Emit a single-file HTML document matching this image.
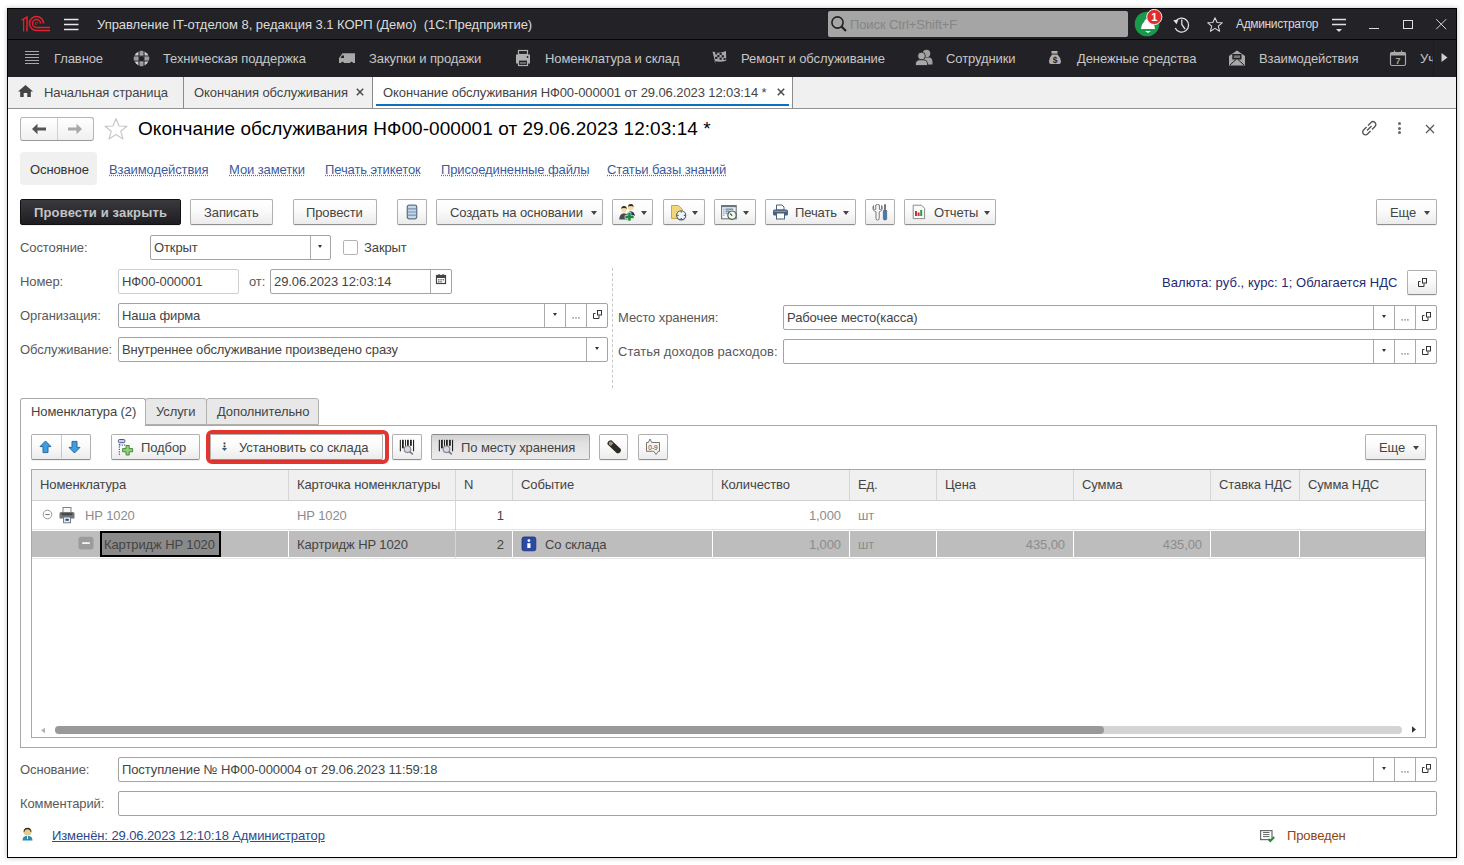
<!DOCTYPE html>
<html><head><meta charset="utf-8">
<style>
*{box-sizing:border-box;margin:0;padding:0}
html,body{width:1464px;height:865px;overflow:hidden;background:#fff}
body{position:relative;font-family:"Liberation Sans",sans-serif;font-size:13px;color:#444}
.a{position:absolute}
.t{position:absolute;white-space:pre;line-height:15px;letter-spacing:-0.1px}
.win{left:7px;top:8px;width:1450px;height:850px;border:1px solid #000;box-shadow:0 0 5px rgba(0,0,0,.25);background:#fff}
.dark{background:#232327}
.mt{color:#c6c6c6}
.tab{color:#444}
.btn{position:absolute;height:26px;top:199px;border:1px solid #b0b0b0;border-bottom-color:#8e8e8e;border-radius:2px;background:linear-gradient(#fff,#fbfbfb 45%,#ebebeb);box-shadow:0 1px 1px rgba(0,0,0,.07)}
.fld{position:absolute;border:1px solid #a3a3a3;border-radius:2px;background:#fff;height:25px}
.lbl{color:#595959}
.vd{position:absolute;top:0;bottom:0;width:1px;background:#ababab}
.lnk{color:#3c5a9a;text-decoration:underline dotted #5a70a8;text-underline-offset:1px}
.arr{position:absolute;width:0;height:0;border-left:3.5px solid transparent;border-right:3.5px solid transparent;border-top:4px solid #444}
.cd{position:absolute;top:470px;width:1px;background:#d6d6d6}
</style></head><body>
<div class="a win"></div>

<!-- title bar -->
<div class="a dark" style="left:8px;top:9px;width:1448px;height:30px"></div>
<div class="a" style="left:8px;top:39px;width:1448px;height:1px;background:#060608"></div>
<!-- menu bar -->
<div class="a dark" style="left:8px;top:40px;width:1448px;height:37px;background:#222226"></div>
<!-- tab bar -->
<div class="a" style="left:8px;top:77px;width:1448px;height:31px;background:#f0f0f0"></div>
<div class="a" style="left:8px;top:108px;width:1448px;height:1px;background:#929292"></div>

<!-- title text -->
<div class="t" style="left:97px;top:17px;color:#dcdcdc;letter-spacing:-0.04px">Управление IT-отделом 8, редакция 3.1 КОРП (Демо)  (1С:Предприятие)</div>
<!-- search -->
<div class="a" style="left:828px;top:11px;width:300px;height:26px;background:#a5a5a5;border-radius:2px"></div>
<div class="t" style="left:850px;top:17px;color:#858585">Поиск Ctrl+Shift+F</div>
<div class="t" style="left:1236px;top:17px;color:#d8d8d8;font-size:12px;letter-spacing:-0.35px">Администратор</div>

<!-- menu text -->
<div class="t mt" style="left:54px;top:51px">Главное</div>
<div class="t mt" style="left:163px;top:51px">Техническая поддержка</div>
<div class="t mt" style="left:369px;top:51px">Закупки и продажи</div>
<div class="t mt" style="left:545px;top:51px">Номенклатура и склад</div>
<div class="t mt" style="left:741px;top:51px">Ремонт и обслуживание</div>
<div class="t mt" style="left:946px;top:51px">Сотрудники</div>
<div class="t mt" style="left:1077px;top:51px">Денежные средства</div>
<div class="t mt" style="left:1259px;top:51px">Взаимодействия</div>
<div class="t mt" style="left:1420px;top:51px">Уч</div>
<div class="a" style="left:1434px;top:40px;width:22px;height:37px;background:#222226"></div>

<!-- tabs -->
<div class="a" style="left:183px;top:77px;width:1px;height:31px;background:#8a8a8a"></div>
<div class="a" style="left:372px;top:77px;width:1px;height:31px;background:#8a8a8a"></div>
<div class="a" style="left:373px;top:77px;width:419px;height:31px;background:#fff"></div>
<div class="a" style="left:792px;top:77px;width:1px;height:31px;background:#8a8a8a"></div>
<div class="a" style="left:376px;top:104px;width:413px;height:2px;background:#0a70c0"></div>
<div class="t tab" style="left:44px;top:85px">Начальная страница</div>
<div class="t tab" style="left:194px;top:85px">Окончания обслуживания</div>
<div class="t tab" style="left:383px;top:85px">Окончание обслуживания НФ00-000001 от 29.06.2023 12:03:14 *</div>

<!-- form header -->
<div class="a" style="left:20px;top:117px;width:74px;height:24px;border:1px solid #b5b5b5;border-bottom-color:#9a9a9a;border-radius:3px;background:linear-gradient(#fff,#f0f0f0)"></div>
<div class="a" style="left:57px;top:118px;width:1px;height:22px;background:#cfcfcf"></div>
<div class="t" style="left:138px;top:118px;font-size:19px;line-height:22px;color:#000;letter-spacing:0.06px">Окончание обслуживания НФ00-000001 от 29.06.2023 12:03:14 *</div>

<div class="a" style="left:20px;top:152px;width:77px;height:33px;background:#f0f0f0;border-radius:4px"></div>
<div class="t" style="left:30px;top:162px;color:#333">Основное</div>
<div class="t lnk" style="left:109px;top:162px">Взаимодействия</div>
<div class="t lnk" style="left:229px;top:162px">Мои заметки</div>
<div class="t lnk" style="left:325px;top:162px">Печать этикеток</div>
<div class="t lnk" style="left:441px;top:162px">Присоединенные файлы</div>
<div class="t lnk" style="left:607px;top:162px">Статьи базы знаний</div>

<!-- command bar -->
<div class="btn" style="left:20px;width:161px;background:linear-gradient(#3a3a3e,#1e1e22);border-color:#111"></div>
<div class="t" style="left:34px;top:205px;font-weight:bold;color:#c4c4c4;letter-spacing:0.15px">Провести и закрыть</div>
<div class="btn" style="left:190px;width:83px"></div>
<div class="t" style="left:204px;top:205px">Записать</div>
<div class="btn" style="left:293px;width:84px"></div>
<div class="t" style="left:306px;top:205px">Провести</div>
<div class="btn" style="left:397px;width:30px"></div>
<div class="btn" style="left:436px;width:167px"></div>
<div class="t" style="left:450px;top:205px">Создать на основании</div>
<div class="btn" style="left:612px;width:41px"></div>
<div class="btn" style="left:663px;width:42px"></div>
<div class="btn" style="left:714px;width:42px"></div>
<div class="btn" style="left:765px;width:91px"></div>
<div class="t" style="left:795px;top:205px">Печать</div>
<div class="btn" style="left:865px;width:30px"></div>
<div class="btn" style="left:904px;width:92px"></div>
<div class="t" style="left:934px;top:205px">Отчеты</div>
<div class="btn" style="left:1376px;width:61px"></div>
<div class="t" style="left:1390px;top:205px">Еще</div>

<!-- fields -->
<div class="t lbl" style="left:20px;top:240px">Состояние:</div>
<div class="fld" style="left:150px;top:235px;width:181px"><div class="vd" style="left:159px"></div></div>
<div class="t" style="left:154px;top:240px">Открыт</div>
<div class="a" style="left:343px;top:240px;width:15px;height:15px;border:1px solid #b3b3b3;border-radius:2px;background:#fff"></div>
<div class="t" style="left:364px;top:240px">Закрыт</div>

<div class="t lbl" style="left:20px;top:274px">Номер:</div>
<div class="fld" style="left:118px;top:269px;width:121px;border-color:#d0d0d0"></div>
<div class="t" style="left:122px;top:274px">НФ00-000001</div>
<div class="t lbl" style="left:249px;top:274px">от:</div>
<div class="fld" style="left:270px;top:269px;width:182px"><div class="vd" style="left:159px"></div></div>
<div class="t" style="left:274px;top:274px">29.06.2023 12:03:14</div>
<div class="t" style="left:1162px;top:275px;color:#1f2a70;letter-spacing:0.05px">Валюта: руб., курс: 1; Облагается НДС</div>
<div class="btn" style="left:1407px;top:270px;width:30px;height:25px"></div>

<div class="t lbl" style="left:20px;top:308px">Организация:</div>
<div class="fld" style="left:118px;top:303px;width:490px"><div class="vd" style="left:425px"></div><div class="vd" style="left:446px"></div><div class="vd" style="left:467px"></div></div>
<div class="t" style="left:122px;top:308px">Наша фирма</div>
<div class="t lbl" style="left:618px;top:310px">Место хранения:</div>
<div class="fld" style="left:783px;top:305px;width:654px"><div class="vd" style="left:589px"></div><div class="vd" style="left:610px"></div><div class="vd" style="left:631px"></div></div>
<div class="t" style="left:787px;top:310px">Рабочее место(касса)</div>

<div class="t lbl" style="left:20px;top:342px">Обслуживание:</div>
<div class="fld" style="left:118px;top:337px;width:490px"><div class="vd" style="left:467px"></div></div>
<div class="t" style="left:122px;top:342px">Внутреннее обслуживание произведено сразу</div>
<div class="t lbl" style="left:618px;top:344px;letter-spacing:0.05px">Статья доходов расходов:</div>
<div class="fld" style="left:783px;top:339px;width:654px"><div class="vd" style="left:589px"></div><div class="vd" style="left:610px"></div><div class="vd" style="left:631px"></div></div>

<div class="a" style="left:612px;top:268px;width:0;height:120px;border-left:1px dashed #c8c8c8"></div>

<!-- tab panel -->
<div class="a" style="left:20px;top:425px;width:1417px;height:323px;border:1px solid #a8a8a8"></div>
<div class="a" style="left:20px;top:398px;width:126px;height:28px;border:1px solid #a8a8a8;border-bottom:none;border-radius:3px 3px 0 0;background:#fff"></div>
<div class="a" style="left:145px;top:398px;width:62px;height:27px;border:1px solid #b0b0b0;border-radius:3px 3px 0 0;background:#e8e8e8"></div>
<div class="a" style="left:206px;top:398px;width:113px;height:27px;border:1px solid #b0b0b0;border-radius:3px 3px 0 0;background:#e8e8e8"></div>
<div class="t" style="left:31px;top:404px">Номенклатура (2)</div>
<div class="t" style="left:156px;top:404px">Услуги</div>
<div class="t" style="left:217px;top:404px">Дополнительно</div>

<!-- table toolbar -->
<div class="btn" style="left:31px;top:434px;width:60px"></div>
<div class="a" style="left:61px;top:435px;width:1px;height:23px;background:#c8c8c8"></div>
<div class="btn" style="left:111px;top:434px;width:89px"></div>
<div class="t" style="left:141px;top:440px">Подбор</div>
<div class="a" style="left:206px;top:430px;width:183px;height:34px;border:4px solid #e3342f;border-radius:6px"></div>
<div class="btn" style="left:210px;top:434px;width:173px"></div>
<div class="t" style="left:239px;top:440px">Установить со склада</div>
<div class="btn" style="left:392px;top:434px;width:30px"></div>
<div class="btn" style="left:431px;top:434px;width:159px;background:linear-gradient(#d2d2d2,#e2e2e2 35%,#ebebeb);border-color:#a4a4a4;border-top-color:#8c8c8c;box-shadow:none"></div>
<div class="t" style="left:461px;top:440px">По месту хранения</div>
<div class="btn" style="left:599px;top:434px;width:29px"></div>
<div class="btn" style="left:638px;top:434px;width:30px"></div>
<div class="btn" style="left:1365px;top:434px;width:61px"></div>
<div class="t" style="left:1379px;top:440px">Еще</div>

<!-- table -->
<div class="a" style="left:31px;top:469px;width:1395px;height:269px;border:1px solid #a8a8a8"></div>
<div class="a" style="left:32px;top:470px;width:1393px;height:30px;background:#f0f0f0"></div>
<div class="a" style="left:32px;top:500px;width:1393px;height:1px;background:#cfcfcf"></div>
<div class="a" style="left:32px;top:529px;width:1393px;height:1px;background:#e4e4e4"></div>
<div class="a" style="left:32px;top:531px;width:1393px;height:26px;background:#bdbdbd"></div>
<div class="a" style="left:32px;top:558px;width:1393px;height:1px;background:#e4e4e4"></div>
<div class="a" style="left:288px;top:531px;width:1px;height:26px;background:#fff"></div><div class="a" style="left:512px;top:531px;width:1px;height:26px;background:#fff"></div><div class="a" style="left:712px;top:531px;width:1px;height:26px;background:#fff"></div><div class="a" style="left:849px;top:531px;width:1px;height:26px;background:#fff"></div><div class="a" style="left:936px;top:531px;width:1px;height:26px;background:#fff"></div><div class="a" style="left:1073px;top:531px;width:1px;height:26px;background:#fff"></div><div class="a" style="left:1210px;top:531px;width:1px;height:26px;background:#fff"></div><div class="a" style="left:1299px;top:531px;width:1px;height:26px;background:#fff"></div>
<div class="cd" style="left:288px;height:30px"></div>
<div class="cd" style="left:455px;height:88px"></div>
<div class="cd" style="left:512px;height:30px"></div>
<div class="cd" style="left:712px;height:30px"></div>
<div class="cd" style="left:849px;height:30px"></div>
<div class="cd" style="left:936px;height:30px"></div>
<div class="cd" style="left:1073px;height:30px"></div>
<div class="cd" style="left:1210px;height:30px"></div>
<div class="cd" style="left:1299px;height:30px"></div>
<div class="t" style="left:40px;top:477px">Номенклатура</div>
<div class="t" style="left:297px;top:477px">Карточка номенклатуры</div>
<div class="t" style="left:464px;top:477px">N</div>
<div class="t" style="left:521px;top:477px">Событие</div>
<div class="t" style="left:721px;top:477px">Количество</div>
<div class="t" style="left:858px;top:477px">Ед.</div>
<div class="t" style="left:945px;top:477px">Цена</div>
<div class="t" style="left:1082px;top:477px">Сумма</div>
<div class="t" style="left:1219px;top:477px">Ставка НДС</div>
<div class="t" style="left:1308px;top:477px">Сумма НДС</div>

<div class="t" style="left:85px;top:508px;color:#8c8c8c">HP 1020</div>
<div class="t" style="left:297px;top:508px;color:#8c8c8c">HP 1020</div>
<div class="t" style="left:455px;top:508px;width:49px;text-align:right">1</div>
<div class="t" style="left:712px;top:508px;width:129px;text-align:right;color:#8c8c8c">1,000</div>
<div class="t" style="left:858px;top:508px;color:#8c8c8c">шт</div>

<div class="a" style="left:100px;top:531px;width:121px;height:26px;border:2px solid #000;background:#8a8a8a"></div>
<div class="t" style="left:104px;top:537px">Картридж HP 1020</div>
<div class="t" style="left:297px;top:537px">Картридж HP 1020</div>
<div class="t" style="left:455px;top:537px;width:49px;text-align:right">2</div>
<div class="t" style="left:545px;top:537px">Со склада</div>
<div class="t" style="left:712px;top:537px;width:129px;text-align:right;color:#8c8c8c">1,000</div>
<div class="t" style="left:858px;top:537px;color:#8c8c8c">шт</div>
<div class="t" style="left:936px;top:537px;width:129px;text-align:right;color:#8c8c8c">435,00</div>
<div class="t" style="left:1073px;top:537px;width:129px;text-align:right;color:#8c8c8c">435,00</div>

<!-- scrollbar -->
<div class="a" style="left:55px;top:726px;width:1347px;height:8px;background:#d4d4d4;border-radius:4px"></div>
<div class="a" style="left:55px;top:726px;width:1049px;height:8px;background:#999;border-radius:4px"></div>

<!-- bottom -->
<div class="t lbl" style="left:20px;top:762px">Основание:</div>
<div class="fld" style="left:118px;top:757px;width:1319px"><div class="vd" style="left:1254px"></div><div class="vd" style="left:1275px"></div><div class="vd" style="left:1296px"></div></div>
<div class="t" style="left:122px;top:762px">Поступление № НФ00-000004 от 29.06.2023 11:59:18</div>
<div class="t lbl" style="left:20px;top:796px">Комментарий:</div>
<div class="fld" style="left:118px;top:791px;width:1319px"></div>
<div class="t" style="left:52px;top:828px;color:#2b4a8c;text-decoration:underline">Изменён: 29.06.2023 12:10:18 Администратор</div>
<div class="t" style="left:1287px;top:828px;color:#8b4513">Проведен</div>


<!-- ICONS title bar -->
<svg class="a" style="left:18px;top:14px" width="36" height="20" viewBox="0 0 36 20">
 <g fill="none" stroke="#e3202e" stroke-width="1.5">
  <path d="M3.6 6.2 L9 3 V17.6"/><path d="M5.6 5.5 V17.6" stroke-width="1.2"/>
  <path d="M25.5 9.5 A7 7 0 1 0 18.5 16.5 H32" stroke-width="1.6"/>
  <path d="M22.5 9.5 A4 4 0 1 0 18.5 13.5 H32" stroke-width="1.5"/>
  <path d="M19.8 9.5 A1.3 1.3 0 1 0 18.5 10.8" stroke-width="1"/>
 </g>
</svg>
<svg class="a" style="left:63px;top:18px" width="17" height="13"><g stroke="#e8e8e8" stroke-width="1.5"><path d="M1 1.6H15.5M1 6.5H15.5M1 11.4H15.5"/></g></svg>
<svg class="a" style="left:829px;top:13px" width="20" height="22"><g fill="none" stroke="#222" stroke-width="1.6"><circle cx="8.5" cy="9.5" r="5.6"/><path d="M12.5 13.5 L17 18" stroke-width="2.2"/></g></svg>
<svg class="a" style="left:1132px;top:8px" width="34" height="32">
 <circle cx="15" cy="16" r="12.3" fill="#19994a"/>
 <path d="M9 21 Q9.5 16 12 14 Q13 10.5 16 10.5 Q19 10.5 20 14 Q22.5 16 23 21 Z" fill="#fff"/>
 <path d="M13 23 H19 L16 25 Z" fill="#fff"/>
 <circle cx="22.3" cy="9" r="7.6" fill="#e32b2b" stroke="#f3f3f3" stroke-width="1"/>
 <text x="22.3" y="13.2" font-family="Liberation Sans" font-weight="bold" font-size="11" fill="#fff" text-anchor="middle">1</text>
</svg>
<svg class="a" style="left:1171px;top:14px" width="22" height="21"><g fill="none" stroke="#e0e0e0" stroke-width="1.3"><path d="M4.6 7.5 A7 7 0 1 1 4.2 14"/><path d="M10.8 5.5 V10.5 L14 15"/></g><path d="M2.2 6.2 L7.4 5.4 L5.6 10.2 Z" fill="#e0e0e0"/></svg>
<svg class="a" style="left:1204px;top:14px" width="22" height="21"><path transform="translate(11 10.8) scale(.82) translate(-11 -10.8)" d="M11 2.2 L13.6 8 L19.8 8.4 L15 12.4 L16.6 18.6 L11 15.2 L5.4 18.6 L7 12.4 L2.2 8.4 L8.4 8 Z" fill="none" stroke="#d8d8d8" stroke-width="1.3" stroke-linejoin="round"/></svg>
<svg class="a" style="left:1330px;top:16px" width="18" height="18"><g stroke="#e0e0e0" stroke-width="1.3"><path d="M2 3.5H16M2 8.5H16"/></g><path d="M6 13H12L9 16Z" fill="#e0e0e0"/></svg>
<div class="a" style="left:1369px;top:28px;width:10px;height:1px;background:#ddd"></div>
<div class="a" style="left:1403px;top:20px;width:10px;height:9px;border:1px solid #ddd"></div>
<svg class="a" style="left:1435px;top:18px" width="13" height="13"><path d="M1.2 1.2L11.2 11.2M11.2 1.2L1.2 11.2" stroke="#d4d4d4" stroke-width="1"/></svg>

<!-- ICONS menu -->
<svg class="a" style="left:24px;top:50px" width="16" height="15"><g stroke="#a9a9a9" stroke-width="1.1"><path d="M1 1.5H15M1 4.5H15M1 7.5H15M1 10.5H15M1 13.5H15"/></g></svg>
<svg class="a" style="left:133px;top:50px" width="17" height="17">
 <circle cx="8.5" cy="8.5" r="7.6" fill="#cfcfcf"/>
 <g fill="#9a9a9a"><rect x="6.6" y="0.8" width="3.8" height="4"/><rect x="6.6" y="12.2" width="3.8" height="4"/><rect x="0.8" y="6.6" width="4" height="3.8"/><rect x="12.2" y="6.6" width="4" height="3.8"/></g>
 <g stroke="#222226" stroke-width="1.1"><path d="M6 0V17M11 0V17M0 6H17M0 11H17"/></g>
 <circle cx="8.5" cy="8.5" r="2.6" fill="#222226"/>
</svg>
<svg class="a" style="left:338px;top:52px" width="18" height="13"><path d="M4.5 1.2 H17 V11 H1 V6 Z" fill="#a8a8a8"/><path d="M4 3.5 L2.5 6 H6 V3.5Z" fill="#222226"/><circle cx="4.5" cy="11.2" r="1.4" fill="#222226"/><circle cx="13.5" cy="11.2" r="1.4" fill="#222226"/></svg>
<svg class="a" style="left:514px;top:49px" width="18" height="18"><path d="M2 5.5 H16 V14.5 H2 Z" fill="#b0b0b0"/><rect x="4.5" y="1.5" width="9" height="4" fill="none" stroke="#b0b0b0" stroke-width="1.2"/><rect x="4.5" y="11" width="9" height="5.5" fill="#222226" stroke="#b0b0b0" stroke-width="1.2"/><rect x="6" y="13.5" width="6" height="1" fill="#b0b0b0"/><circle cx="13.5" cy="8" r="0.9" fill="#222226"/></svg>
<svg class="a" style="left:711px;top:50px" width="17" height="17"><path d="M1.5 1.5 Q8 4 15 1 L15.2 10.8 Q9 12.5 3.5 11 L5 15.5 Z" fill="#a8a8a8"/><g fill="#222226"><rect x="4.2" y="2.2" width="2.2" height="2.2"/><rect x="8.5" y="2.8" width="2.2" height="2.2"/><rect x="6.3" y="5" width="2.2" height="2.2"/><rect x="10.7" y="5.2" width="2.2" height="2.2"/><rect x="4.2" y="6.8" width="2.2" height="2.2"/><rect x="8.5" y="7.6" width="2.2" height="2.2"/><rect x="12.6" y="8" width="2" height="2"/></g></svg>
<svg class="a" style="left:915px;top:49px" width="18" height="17"><circle cx="11.5" cy="4.5" r="3.8" fill="#a0a0a0"/><path d="M8 8.5 H15 Q17.5 9.5 17.5 13 V15.5 H8Z" fill="#a0a0a0"/><circle cx="6.5" cy="7" r="3.8" fill="#a8a8a8" stroke="#222226" stroke-width="0.8"/><path d="M0.5 16.5 V14 Q1 11 4.5 10.8 H8.5 Q12 11 12.5 14 V16.5Z" fill="#a8a8a8" stroke="#222226" stroke-width="0.8"/></svg>
<svg class="a" style="left:1048px;top:50px" width="14" height="15"><rect x="3.5" y="1" width="6" height="2.6" fill="#b0b0b0"/><path d="M4 4.5 H9.5 Q13 8 13 11.5 Q13 14 11 14 H3 Q1 14 1 11.5 Q1 8 4 4.5Z" fill="#b0b0b0"/><text x="7" y="12.6" font-family="Liberation Sans" font-size="8.5" font-weight="bold" fill="#222226" text-anchor="middle">$</text></svg>
<svg class="a" style="left:1228px;top:49px" width="18" height="18"><path d="M1 7 L9 1.5 L17 7 V16.5 H1Z" fill="#a8a8a8"/><rect x="4.3" y="5" width="9.2" height="5.5" fill="#222226"/><rect x="5.8" y="6.4" width="6.2" height="2.6" fill="#777"/><path d="M2 16 L8 10.5M16 16 L10 10.5" stroke="#222226" stroke-width="1"/></svg>
<svg class="a" style="left:1389px;top:49px" width="18" height="18"><rect x="1.5" y="3.5" width="15" height="13" rx="1.5" fill="none" stroke="#a8a8a8" stroke-width="1.2"/><rect x="1.5" y="3.5" width="15" height="3" fill="#a8a8a8"/><path d="M5.5 1.5 V5M12.5 1.5 V5" stroke="#a8a8a8" stroke-width="1.2"/><text x="9" y="14.8" font-family="Liberation Sans" font-size="9" font-weight="bold" fill="#a8a8a8" text-anchor="middle">7</text></svg>
<div class="a" style="left:1433px;top:40px;width:1px;height:37px;background:#1c1c20"></div>
<svg class="a" style="left:1440px;top:52px" width="9" height="11"><path d="M1.5 1 L7.5 5.5 L1.5 10Z" fill="#d0d0d0"/></svg>

<!-- ICONS tab bar -->
<svg class="a" style="left:17px;top:84px" width="17" height="14"><path d="M8.5 1 L16 7.5 H13.8 V13 H10.3 V9 H6.7 V13 H3.2 V7.5 H1Z" fill="#444"/></svg>
<svg class="a" style="left:355px;top:87px" width="10" height="10"><path d="M1.8 1.8L8.2 8.2M8.2 1.8L1.8 8.2" stroke="#4a4a4a" stroke-width="1.5"/></svg>
<svg class="a" style="left:776px;top:87px" width="10" height="10"><path d="M1.8 1.8L8.2 8.2M8.2 1.8L1.8 8.2" stroke="#4a4a4a" stroke-width="1.5"/></svg>

<!-- ICONS form header -->
<svg class="a" style="left:30px;top:122px" width="18" height="14"><path d="M2 7 L7.5 1.8 V5.5 H16 V8.5 H7.5 V12.2Z" fill="#555"/></svg>
<svg class="a" style="left:66px;top:122px" width="18" height="14"><path d="M16 7 L10.5 1.8 V5.5 H2 V8.5 H10.5 V12.2Z" fill="#a8a8a8"/></svg>
<svg class="a" style="left:103px;top:116px" width="26" height="25"><path d="M13 2.5 L16 10 L24 10.3 L17.8 15.2 L20 23 L13 18.6 L6 23 L8.2 15.2 L2 10.3 L10 10Z" fill="none" stroke="#c8c8c8" stroke-width="1.2" stroke-linejoin="round"/></svg>
<svg class="a" style="left:1360px;top:119px" width="19" height="19"><g fill="none" stroke="#555" stroke-width="1.4"><path d="M8 6.5 L11 3.5 A2.8 2.8 0 0 1 15 7.5 L12 10.5"/><path d="M10.5 12 L7.5 15 A2.8 2.8 0 0 1 3.5 11 L6.5 8"/><path d="M7 11.5 L11.5 7"/></g></svg>
<g></g>
<div class="a" style="left:1398px;top:122px;width:3px;height:3px;border-radius:50%;background:#666"></div>
<div class="a" style="left:1398px;top:126.5px;width:3px;height:3px;border-radius:50%;background:#666"></div>
<div class="a" style="left:1398px;top:131px;width:3px;height:3px;border-radius:50%;background:#666"></div>
<svg class="a" style="left:1425px;top:124px" width="10" height="10"><path d="M1 1L9 9M9 1L1 9" stroke="#555" stroke-width="1.2"/></svg>

<!-- ICONS command bar -->
<svg class="a" style="left:406px;top:204px" width="12" height="16"><rect x="1.3" y="1.2" width="9.4" height="13.6" rx="1.8" fill="#c2d8ee" stroke="#5f7186" stroke-width="1.3"/><g stroke="#7d8fa3" stroke-width="1.2"><path d="M1.5 4.8H10.5M1.5 8H10.5M1.5 11.2H10.5"/></g></svg>
<div class="arr" style="left:591px;top:211px"></div>
<svg class="a" style="left:618px;top:203px" width="19" height="18">
 <circle cx="12.8" cy="4.6" r="2.8" fill="#f3dca6"/><path d="M10 4 Q10 1 12.8 1 Q15.6 1 15.6 4 Q14 2.6 12.8 3.2 Q11.2 2.6 10 4Z" fill="#3b2b1a"/>
 <path d="M8.8 13 Q9 8.6 12.8 8.2 Q16.6 8.6 16.8 13Z" fill="#2a3350"/>
 <circle cx="6" cy="6.6" r="2.8" fill="#f3dca6"/><path d="M3.2 6 Q3.2 3 6 3 Q8.8 3 8.8 6 Q7.2 4.6 6 5.2 Q4.4 4.6 3.2 6Z" fill="#3b2b1a"/>
 <path d="M1.2 16.5 Q1.4 10.6 6 10.2 Q10.6 10.6 10.8 16.5Z" fill="#4a4a55"/>
 <path d="M9.8 9.5H13V12.5H16V15.5H13V18H9.8V15.5H7V12.5H9.8Z" fill="#1b8a3c" stroke="#e8ffee" stroke-width=".6"/>
</svg>
<div class="arr" style="left:641px;top:211px"></div>
<svg class="a" style="left:670px;top:204px" width="18" height="17">
 <path d="M1.5 1.5H8.5L12.3 5.3V14.5H1.5Z" fill="#f1d77a" stroke="#c9a84a" stroke-width="1"/>
 <circle cx="11.2" cy="11.3" r="4.6" fill="#eef2fb" stroke="#50586a" stroke-width="1.1"/>
 <g fill="#303848"><rect x="10.7" y="7.2" width="1" height="1.4"/><rect x="10.7" y="14" width="1" height="1.4"/><rect x="7.2" y="10.8" width="1.4" height="1"/><rect x="13.8" y="10.8" width="1.4" height="1"/></g>
</svg>
<div class="arr" style="left:692px;top:211px"></div>
<svg class="a" style="left:720px;top:204px" width="18" height="17">
 <rect x="1.6" y="1.6" width="14.6" height="13.2" fill="#f4f8fc" stroke="#6a7480" stroke-width="1.1"/><rect x="1.6" y="1.6" width="14.6" height="1.6" fill="#6a7480"/>
 <g fill="#3a5a9a"><rect x="3.4" y="4.6" width="1" height="1"/><rect x="3.4" y="6.6" width="1" height="1"/><rect x="3.4" y="8.6" width="1" height="1"/><rect x="3.4" y="10.6" width="1" height="1"/><rect x="5.4" y="4.6" width="8" height="1"/><rect x="5.4" y="6.6" width="4" height="1"/><rect x="5.4" y="8.6" width="2" height="1"/></g>
 <circle cx="12" cy="11.2" r="4.2" fill="#eef8ee" stroke="#4a5a4a" stroke-width="1.2"/><path d="M10.2 9.6 L12.2 11.6" stroke="#2a3a2a" stroke-width="1.1"/>
</svg>
<div class="arr" style="left:743px;top:211px"></div>
<svg class="a" style="left:772px;top:204px" width="17" height="16">
 <path d="M4.5 1 H10 L12 3 V6 H4.5Z" fill="#fff" stroke="#47607a" stroke-width="1"/>
 <rect x="1" y="5.5" width="15" height="6" rx="1.6" fill="#47607a"/>
 <rect x="4.5" y="9" width="8" height="6" fill="#fff" stroke="#47607a" stroke-width="1"/>
 <rect x="2.2" y="6.8" width="12.6" height="1" fill="#8aa0b8"/>
</svg>
<div class="arr" style="left:843px;top:211px"></div>
<svg class="a" style="left:871px;top:203px" width="18" height="18">
 <path d="M2.6 2.5 Q1.2 5 2.4 7 Q3.4 8.6 5 8.8 V15.3 Q5 17 6.6 17 Q8.2 17 8.2 15.3 V8.8 Q9.8 8.6 10.8 7 Q12 5 10.6 2.5 V5.6 Q9.8 6.8 8.4 6.4 V2 Q6.6 1 4.8 2 V6.4 Q3.4 6.8 2.6 5.6Z" fill="#f8f8f8" stroke="#777" stroke-width="1"/>
 <rect x="13.2" y="1.3" width="1.6" height="6.5" fill="#555"/><path d="M12.3 7.6 H15.7 V15.5 Q15.7 17 14 17 Q12.3 17 12.3 15.5Z" fill="#4a7aa8" stroke="#35577a" stroke-width=".6"/>
</svg>
<svg class="a" style="left:912px;top:204px" width="14" height="16">
 <path d="M1.2 1.2 H9.5 L12.6 4.3 V14.6 H1.2Z" fill="#fbfbfb" stroke="#8a8a8a" stroke-width="1"/>
 <rect x="3" y="7" width="2" height="5" fill="#c8343a"/><rect x="5.6" y="8.5" width="2" height="3.5" fill="#c8343a"/><rect x="8.2" y="6" width="2" height="6" fill="#2a9a4a"/>
</svg>
<div class="arr" style="left:984px;top:211px"></div>
<div class="arr" style="left:1424px;top:211px"></div>

<svg class="a" style="left:435px;top:273px" width="12" height="12"><rect x="1.5" y="2.5" width="9" height="8" fill="none" stroke="#444" stroke-width="1.2"/><rect x="1.5" y="2.5" width="9" height="2.5" fill="#444"/><path d="M4 1V3M8 1V3" stroke="#444" stroke-width="1.2"/><g fill="#444"><rect x="3.2" y="6.2" width="1.3" height="1.2"/><rect x="5.4" y="6.2" width="1.3" height="1.2"/><rect x="7.6" y="6.2" width="1.3" height="1.2"/><rect x="3.2" y="8.2" width="1.3" height="1.2"/><rect x="5.4" y="8.2" width="1.3" height="1.2"/></g></svg>

<!-- field buttons -->
<div class="a" style="left:318.0px;top:245px;width:0;height:0;border-left:2.5px solid transparent;border-right:2.5px solid transparent;border-top:3px solid #333"></div>
<div class="a" style="left:552.5px;top:313px;width:0;height:0;border-left:2.5px solid transparent;border-right:2.5px solid transparent;border-top:3px solid #333"></div>
<svg class="a" style="left:572px;top:317px" width="8" height="2"><g fill="#555"><rect x="0.5" y="0.3" width="1.2" height="1.2"/><rect x="3.4" y="0.3" width="1.2" height="1.2"/><rect x="6.3" y="0.3" width="1.2" height="1.2"/></g></svg>
<svg class="a" style="left:592px;top:309px" width="10" height="10"><g fill="none" stroke="#333" stroke-width="1"><rect x="5.5" y="1.5" width="4" height="4.5"/><path d="M3.5 4.5 H1.5 V9.5 H7 V6.5"/></g></svg>
<div class="a" style="left:594.5px;top:347px;width:0;height:0;border-left:2.5px solid transparent;border-right:2.5px solid transparent;border-top:3px solid #333"></div>
<div class="a" style="left:1381.5px;top:315px;width:0;height:0;border-left:2.5px solid transparent;border-right:2.5px solid transparent;border-top:3px solid #333"></div>
<svg class="a" style="left:1401px;top:319px" width="8" height="2"><g fill="#555"><rect x="0.5" y="0.3" width="1.2" height="1.2"/><rect x="3.4" y="0.3" width="1.2" height="1.2"/><rect x="6.3" y="0.3" width="1.2" height="1.2"/></g></svg>
<svg class="a" style="left:1421px;top:311px" width="10" height="10"><g fill="none" stroke="#333" stroke-width="1"><rect x="5.5" y="1.5" width="4" height="4.5"/><path d="M3.5 4.5 H1.5 V9.5 H7 V6.5"/></g></svg>
<div class="a" style="left:1381.5px;top:349px;width:0;height:0;border-left:2.5px solid transparent;border-right:2.5px solid transparent;border-top:3px solid #333"></div>
<svg class="a" style="left:1401px;top:353px" width="8" height="2"><g fill="#555"><rect x="0.5" y="0.3" width="1.2" height="1.2"/><rect x="3.4" y="0.3" width="1.2" height="1.2"/><rect x="6.3" y="0.3" width="1.2" height="1.2"/></g></svg>
<svg class="a" style="left:1421px;top:345px" width="10" height="10"><g fill="none" stroke="#333" stroke-width="1"><rect x="5.5" y="1.5" width="4" height="4.5"/><path d="M3.5 4.5 H1.5 V9.5 H7 V6.5"/></g></svg>
<div class="a" style="left:1381.5px;top:767px;width:0;height:0;border-left:2.5px solid transparent;border-right:2.5px solid transparent;border-top:3px solid #333"></div>
<svg class="a" style="left:1401px;top:771px" width="8" height="2"><g fill="#555"><rect x="0.5" y="0.3" width="1.2" height="1.2"/><rect x="3.4" y="0.3" width="1.2" height="1.2"/><rect x="6.3" y="0.3" width="1.2" height="1.2"/></g></svg>
<svg class="a" style="left:1421px;top:763px" width="10" height="10"><g fill="none" stroke="#333" stroke-width="1"><rect x="5.5" y="1.5" width="4" height="4.5"/><path d="M3.5 4.5 H1.5 V9.5 H7 V6.5"/></g></svg>
<svg class="a" style="left:1417px;top:277px" width="10" height="10"><g fill="none" stroke="#333" stroke-width="1"><rect x="5.5" y="1.5" width="4" height="4.5"/><path d="M3.5 4.5 H1.5 V9.5 H7 V6.5"/></g></svg>
<!-- ICONS table toolbar -->
<svg class="a" style="left:39px;top:440px" width="13" height="14"><path d="M6.5 1 L12 6.6 H9 V12.6 H4 V6.6 H1Z" fill="#3d9ee0" stroke="#2a6b9e" stroke-width="1"/></svg>
<svg class="a" style="left:68px;top:440px" width="13" height="14"><path d="M6.5 13 L12 7.4 H9 V1.4 H4 V7.4 H1Z" fill="#3d9ee0" stroke="#2a6b9e" stroke-width="1"/></svg>
<svg class="a" style="left:117px;top:438px" width="18" height="18">
 <rect x="1.4" y="1.5" width="6.4" height="3.2" rx="1" fill="#c8d4f4" stroke="#45558a" stroke-width="1"/>
 <path d="M2.3 6 V17.5 M2.3 7 H9" stroke="#2a3a6a" stroke-width="1" stroke-dasharray="1.2 1.2"/>
 <path d="M9 7.5 H12.2 V10.6 H15.6 V13.8 H12.2 V17 H9 V13.8 H5.6 V10.6 H9Z" fill="#8fd07a" stroke="#4a8a3a" stroke-width="1"/>
</svg>
<svg class="a" style="left:219px;top:441px" width="10" height="11"><rect x="4.6" y="1.5" width="1.8" height="1.8" fill="#333"/><rect x="4.6" y="4.5" width="1.8" height="1.8" fill="#333"/><path d="M2.8 7 H8.2 L5.5 10Z" fill="#3b5f80"/></svg>
<svg class="a" style="left:398px;top:438px" width="18" height="18">
 <g fill="#222"><rect x="1.8" y="1.8" width="1.1" height="11.5"/><rect x="4" y="1.8" width="1.8" height="8.5"/><rect x="7" y="1.8" width="1" height="6"/><rect x="9" y="1.8" width="1.8" height="6"/><rect x="12" y="1.8" width="1.8" height="6"/><rect x="15" y="1.8" width="1.1" height="11.5"/></g>
 <circle cx="9.5" cy="11.3" r="3.3" fill="#d8d8e8" stroke="#888" stroke-width="1.1"/><path d="M11.8 13.6 L14.8 16.4" stroke="#777" stroke-width="1.6"/>
</svg>
<svg class="a" style="left:437px;top:438px" width="18" height="18">
 <g fill="#222"><rect x="1.8" y="1.8" width="1.1" height="11.5"/><rect x="4" y="1.8" width="1.8" height="8.5"/><rect x="7" y="1.8" width="1" height="6"/><rect x="9" y="1.8" width="1.8" height="6"/><rect x="12" y="1.8" width="1.8" height="6"/><rect x="15" y="1.8" width="1.1" height="11.5"/></g>
 <circle cx="9.5" cy="11.3" r="3.3" fill="#d8d8e8" stroke="#888" stroke-width="1.1"/><path d="M11.8 13.6 L14.8 16.4" stroke="#777" stroke-width="1.6"/>
</svg>
<svg class="a" style="left:605px;top:438px" width="18" height="17"><path d="M3 3.8 Q4.2 1.8 6.4 2.2 L15.8 11 Q16.6 12.6 15 14.6 Q13.2 16 11.6 15 L2.6 6.4 Q2 5 3 3.8Z" fill="#2e2a26"/><path d="M4 4.5 Q5 3.2 6.2 3.6 L8.3 5.6 L5.7 8 L3.8 6.2Z" fill="#9a9488"/></svg>
<svg class="a" style="left:644px;top:437px" width="18" height="19">
 <path d="M2.5 5.5 H4.3 L6 2 L7.7 5.5 H15.5 V14.3 H14.2 L12 17.5 L9.8 14.3 H2.5Z" fill="#f4f4f4" stroke="#6a6a6a" stroke-width="0.9"/>
 <text x="9" y="12.6" font-family="Liberation Sans" font-size="6.5" fill="#444" text-anchor="middle">0-9</text>
</svg>
<div class="arr" style="left:1413px;top:446px"></div>

<!-- ICONS table rows -->
<svg class="a" style="left:42px;top:509px" width="11" height="11"><circle cx="5.5" cy="5.5" r="4.3" fill="#fff" stroke="#8a8a8a" stroke-width="0.9"/><path d="M3.3 5.5 H7.7" stroke="#777" stroke-width="1"/></svg>
<svg class="a" style="left:58px;top:506px" width="18" height="18">
 <rect x="5" y="1.5" width="8" height="5.5" fill="#fafafa" stroke="#777" stroke-width="0.9"/>
 <path d="M1.5 7.5 Q1.5 6 3 6 H15 Q16.5 6 16.5 7.5 V12.6 H1.5Z" fill="#777"/>
 <rect x="3.5" y="7.2" width="11" height="2" fill="#444"/>
 <rect x="5.6" y="11" width="7" height="5.8" fill="#e8f0fa" stroke="#5a7088" stroke-width="0.9"/>
 <rect x="7.4" y="12.8" width="3.4" height="2" fill="#3a4a5a"/>
</svg>
<svg class="a" style="left:78px;top:536px" width="16" height="14"><rect x="0.5" y="0.8" width="15" height="12.6" rx="2.5" fill="#9c9c9c"/><rect x="4.2" y="6.2" width="7.6" height="1.8" fill="#f4f4f4"/></svg>
<svg class="a" style="left:521px;top:536px" width="16" height="16"><rect x="1" y="1" width="13.8" height="13.8" rx="2" fill="#2b4aa6" stroke="#1c2f7a" stroke-width="0.8"/><circle cx="7.9" cy="4.6" r="1.4" fill="#fff"/><rect x="6.3" y="7.2" width="3.2" height="4.8" fill="#fff"/></svg>

<!-- ICONS scroll + footer -->
<svg class="a" style="left:40px;top:727px" width="6" height="7"><path d="M5 0.8 V6.2 L1.2 3.5Z" fill="#b0b0b0"/></svg>
<svg class="a" style="left:1411px;top:725px" width="6" height="9"><path d="M1 1.2 V7.8 L5 4.5Z" fill="#333"/></svg>
<svg class="a" style="left:21px;top:826px" width="13" height="16">
 <path d="M6.5 2 Q2.8 2 2.6 5.8 Q2.6 7.6 3.4 8.4 Q4.4 9.6 6.5 9.6 Q8.6 9.6 9.6 8.4 Q10.4 7.6 10.4 5.8 Q10.2 2 6.5 2Z" fill="#e2cc90"/>
 <path d="M2.6 6.2 Q2.4 2 6.5 1.8 Q10.6 2 10.4 6.2 L9.6 6 Q9.4 3.2 6.5 3.2 Q3.6 3.2 3.4 6Z" fill="#3a2a12"/>
 <path d="M1.5 14.6 Q1.6 10.4 5 10 H8 Q11.4 10.4 11.5 14.6Z" fill="#2f8ab0"/>
 <rect x="6" y="10" width="1" height="3" fill="#dff"/>
</svg>
<svg class="a" style="left:1259px;top:829px" width="17" height="14">
 <rect x="1.6" y="1.6" width="11.4" height="9" fill="#fff" stroke="#6a6a6a" stroke-width="1.2"/>
 <path d="M4 3.5 H10.5 M4 5.6 H10.5 M4 7.6 H10.5" stroke="#555" stroke-width=".9"/>
 <path d="M9.5 10 L11.3 12 L15.2 8" fill="none" stroke="#2a8a3a" stroke-width="2"/>
</svg>

</body></html>
